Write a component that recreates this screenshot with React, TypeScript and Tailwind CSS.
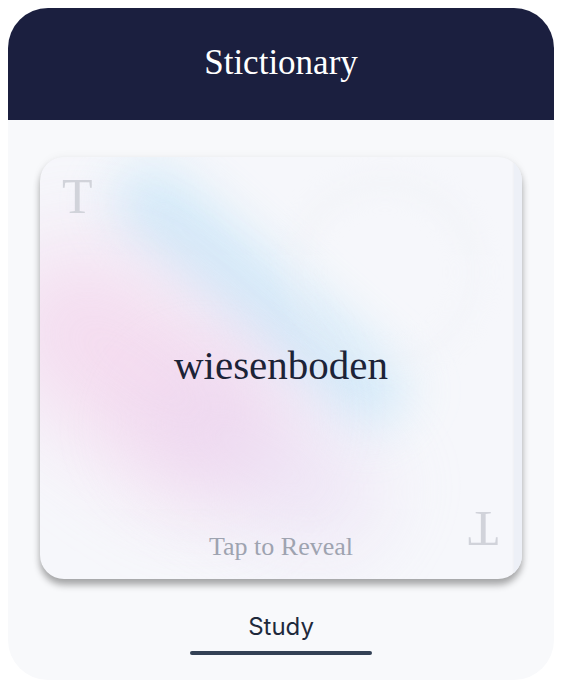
import React from "react";

export default function App() {
  return (
    <div className="w-[562px] h-[688px] bg-white p-2">
      <div className="w-full h-[672px] rounded-[40px] overflow-hidden bg-[#f8f9fb] flex flex-col">
        <div className="h-[112px] bg-[#1b1f3f] flex items-center justify-center shrink-0">
          <h1 className="text-white text-[35px] leading-none font-['Liberation_Serif',serif] pb-[3px]">Stictionary</h1>
        </div>
        <div className="flex flex-col items-center px-8 pt-[37px]">
          <div className="relative w-full h-[422px] rounded-[24px] bg-[#f6f7fb] overflow-hidden shadow-[0_6px_7px_rgba(0,0,0,0.32),0_0_10px_rgba(0,0,0,0.05)] flex flex-col items-center">
            {/* blobs */}
            <div className="absolute left-[40px] top-[105px] w-[360px] h-[70px] rounded-full bg-[#bde3f8] opacity-65 blur-[26px] rotate-[41deg]" />
            <div className="absolute left-[-60px] top-[130px] w-[320px] h-[170px] rounded-full bg-[#f3c6e6] opacity-55 blur-[45px] rotate-[35deg]" />
            <div className="absolute left-[90px] top-[240px] w-[260px] h-[120px] rounded-full bg-[#e6d3f0] opacity-45 blur-[40px] rotate-[30deg]" />
            <div className="absolute left-[250px] top-[20px] w-[190px] h-[190px] rounded-full border-[12px] border-[#eef0f6] opacity-50 blur-[12px]" />
            {/* card edge strip */}
            <div className="absolute right-0 top-0 bottom-0 w-[8px] bg-[#edf0f7] shadow-[-1px_0_2px_rgba(0,0,0,0.03)]" />

            <span className="absolute left-[22px] top-[14px] text-[50px] leading-none text-[#d1d3da] font-['Liberation_Serif',serif]">T</span>
            <span className="absolute right-[23px] bottom-[25px] text-[50px] leading-none text-[#d1d3da] font-['Liberation_Serif',serif] rotate-180">T</span>

            <div className="relative flex-1 flex items-center justify-center pt-[40px]">
              <span className="text-[41px] leading-none text-[#1c2337] font-['Liberation_Serif',serif]">wiesenboden</span>
            </div>
            <div className="relative pb-[18px]">
              <span className="text-[26px] leading-none text-[#9ea3b0] font-['Liberation_Serif',serif]">Tap to Reveal</span>
            </div>
          </div>
          <div className="mt-[36px] flex flex-col items-center">
            <span className="text-[24px] leading-none text-[#1e293b] font-['Inter',sans-serif]">Study</span>
            <div className="mt-[12px] w-[182px] h-[4px] rounded-full bg-[#334155]" />
          </div>
        </div>
      </div>
    </div>
  );
}
